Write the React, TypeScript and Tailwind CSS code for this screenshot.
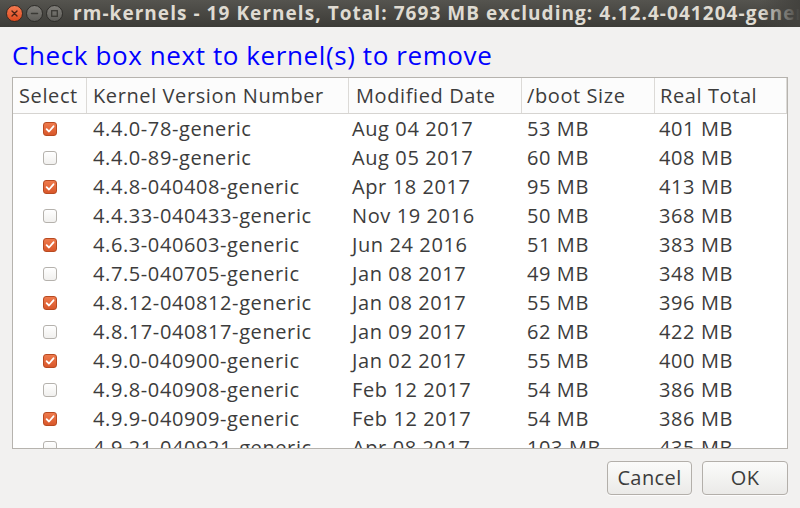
import React from 'react';

const ROWS = [
  { v: '4.4.0-78-generic', d: 'Aug 04 2017', b: '53 MB', t: '401 MB', on: true },
  { v: '4.4.0-89-generic', d: 'Aug 05 2017', b: '60 MB', t: '408 MB', on: false },
  { v: '4.4.8-040408-generic', d: 'Apr 18 2017', b: '95 MB', t: '413 MB', on: true },
  { v: '4.4.33-040433-generic', d: 'Nov 19 2016', b: '50 MB', t: '368 MB', on: false },
  { v: '4.6.3-040603-generic', d: 'Jun 24 2016', b: '51 MB', t: '383 MB', on: true },
  { v: '4.7.5-040705-generic', d: 'Jan 08 2017', b: '49 MB', t: '348 MB', on: false },
  { v: '4.8.12-040812-generic', d: 'Jan 08 2017', b: '55 MB', t: '396 MB', on: true },
  { v: '4.8.17-040817-generic', d: 'Jan 09 2017', b: '62 MB', t: '422 MB', on: false },
  { v: '4.9.0-040900-generic', d: 'Jan 02 2017', b: '55 MB', t: '400 MB', on: true },
  { v: '4.9.8-040908-generic', d: 'Feb 12 2017', b: '54 MB', t: '386 MB', on: false },
  { v: '4.9.9-040909-generic', d: 'Feb 12 2017', b: '54 MB', t: '386 MB', on: true },
  { v: '4.9.21-040921-generic', d: 'Apr 08 2017', b: '103 MB', t: '435 MB', on: false },
];

const COLS = 'grid grid-cols-[74px_262px_173px_133px_1fr]';

function Check({ on }: { on: boolean }) {
  if (!on) {
    return <div className="h-[14px] w-[14px] rounded-[3px] border border-[#b5b2ad] bg-gradient-to-b from-white to-[#f1f0ee]" />;
  }
  return (
    <div className="flex h-[14px] w-[14px] items-center justify-center rounded-[3px] border border-[#b84a21] bg-gradient-to-b from-[#ee7a4c] to-[#d9572a]">
      <svg width="10" height="10" viewBox="0 0 10 10">
        <path d="M1.6 5.2 L4 7.5 L8.5 2.3" fill="none" stroke="#fff" strokeWidth="1.8" strokeLinecap="round" strokeLinejoin="round" />
      </svg>
    </div>
  );
}

function WinBtn({ kind }: { kind: 'close' | 'min' | 'max' }) {
  const close = kind === 'close';
  return (
    <div
      className={`flex h-[17px] w-[17px] items-center justify-center rounded-full border ${
        close
          ? 'border-[#3a2a22] bg-gradient-to-b from-[#f57a50] to-[#df4a1c]'
          : 'border-[#2e2d2a] bg-gradient-to-b from-[#807e79] to-[#5d5c58]'
      }`}
    >
      <svg width="9" height="9" viewBox="0 0 9 9">
        {kind === 'close' && <path d="M2 2 L7 7 M7 2 L2 7" stroke="#4a2114" strokeWidth="1.4" strokeLinecap="round" />}
        {kind === 'min' && <path d="M1.5 4.5 H7.5" stroke="#3a3935" strokeWidth="1.5" strokeLinecap="round" />}
        {kind === 'max' && <rect x="1.7" y="1.7" width="5.6" height="5.6" fill="none" stroke="#3a3935" strokeWidth="1.3" />}
      </svg>
    </div>
  );
}

export default function App() {
  return (
    <div
      className="flex h-[508px] w-[800px] flex-col overflow-hidden bg-[#f2f1f0] text-[#3c3c3c]"
      style={{ fontFamily: '"Open Sans", "Noto Sans", sans-serif' }}
    >
      {/* title bar */}
      <div className="relative flex h-[27px] shrink-0 items-center overflow-hidden bg-gradient-to-b from-[#55544f] to-[#3c3b37] pl-[6px]">
        <div className="flex shrink-0 gap-[3px]">
          <WinBtn kind="close" />
          <WinBtn kind="min" />
          <WinBtn kind="max" />
        </div>
        <span className="ml-[10px] whitespace-nowrap text-[19px] font-bold leading-none tracking-[1.05px] text-[#dfdbd2]">
          rm-kernels - 19 Kernels, Total: 7693 MB excluding: 4.12.4-041204-generic
        </span>
        <div className="absolute right-0 top-0 h-full w-[40px] bg-gradient-to-r from-transparent to-[#43423e]" />
      </div>

      {/* heading */}
      <div className="px-[12px] pt-[12px] text-[26px] leading-[33px] tracking-[0.6px] text-[#0000ff]">
        Check box next to kernel(s) to remove
      </div>

      {/* table */}
      <div className="mx-[12px] mt-[5px] h-[372px] w-[776px] overflow-hidden border border-[#b6b3ae] bg-white text-[20px] tracking-[0.6px]">
        <div className={`${COLS} h-[36px] border-b border-[#d6d4d1] bg-[#fcfcfc]`}>
          <div className="flex items-center border-r border-[#dcdad7] pl-[6px]">Select</div>
          <div className="flex items-center border-r border-[#dcdad7] pl-[6px]">Kernel Version Number</div>
          <div className="flex items-center border-r border-[#dcdad7] pl-[7px]">Modified Date</div>
          <div className="flex items-center border-r border-[#dcdad7] pl-[5px]">/boot Size</div>
          <div className="flex items-center border-r border-[#dcdad7] pl-[5px]">Real Total</div>
        </div>
        {ROWS.map(r => (
          <div key={r.v} className={`${COLS} h-[29px] leading-[29px] whitespace-nowrap`}>
            <div className="flex items-center pl-[30px]">
              <Check on={r.on} />
            </div>
            <div className="pl-[6px]">{r.v}</div>
            <div className="pl-[3px]">{r.d}</div>
            <div className="pl-[5px]">{r.b}</div>
            <div className="pl-[4px]">{r.t}</div>
          </div>
        ))}
      </div>

      {/* buttons */}
      <div className="flex justify-end gap-[10px] px-[12px] pt-[12px]">
        <button className="h-[34px] w-[85px] rounded-[4px] border border-[#b3afaa] bg-gradient-to-b from-[#fbfbfa] to-[#ebeae8] text-[20px] tracking-[0.4px] text-[#3c3c3c] shadow-[0_1px_0_rgba(255,255,255,0.8)]">
          Cancel
        </button>
        <button className="h-[34px] w-[86px] rounded-[4px] border border-[#b3afaa] bg-gradient-to-b from-[#fbfbfa] to-[#ebeae8] text-[20px] tracking-[0.4px] text-[#3c3c3c] shadow-[0_1px_0_rgba(255,255,255,0.8)]">
          OK
        </button>
      </div>
    </div>
  );
}
